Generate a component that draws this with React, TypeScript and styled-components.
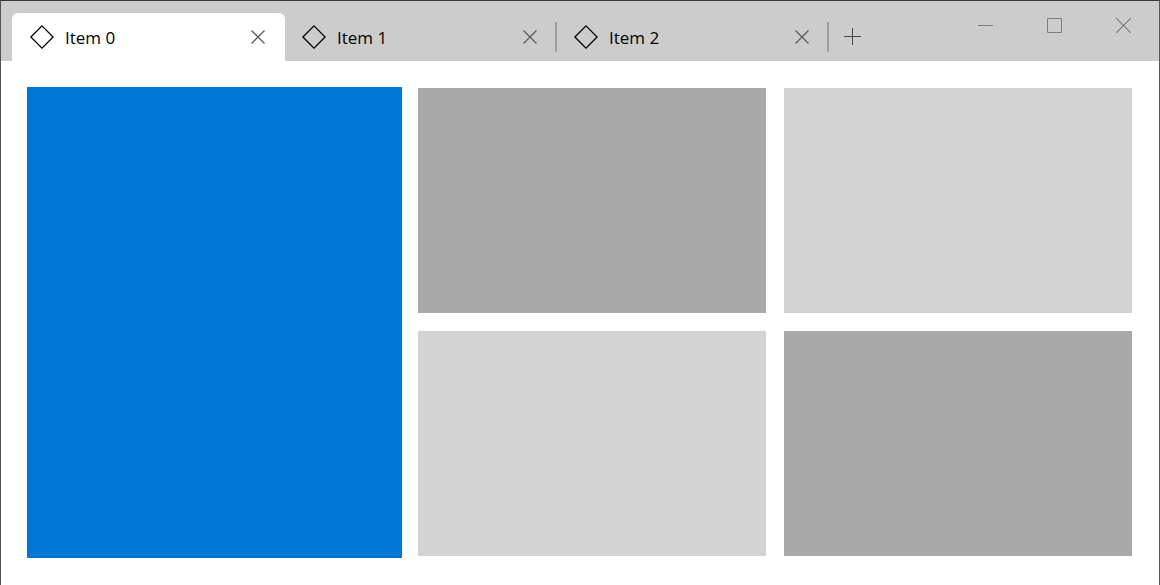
import React, { useState } from "react";
import styled, { createGlobalStyle } from "styled-components";

const GlobalStyle = createGlobalStyle`
  * { box-sizing: border-box; }
  body {
    margin: 0;
    background: #fff;
    color: #000;
    font-family: "Open Sans", "Noto Sans", sans-serif;
    font-size: 17px;
  }
  button {
    margin: 0;
    padding: 0;
    border: 0;
    background: none;
    color: inherit;
    font: inherit;
  }
`;

const Window = styled.div`
  min-height: 100vh;
  border: 1px solid #505058;
  border-top-color: #38383c;
  border-right-color: #58585a;
  border-bottom: 0;
  background: #fff;
`;

const TitleBar = styled.header`
  display: flex;
  align-items: flex-start;
  height: 60px;
  padding: 0 1px 0 11px;
  background: #ccc;
`;

const TabStrip = styled.nav`
  display: flex;
  padding-top: 12px;
`;

const Tab = styled.div<{ $selected: boolean }>`
  display: flex;
  align-items: center;
  width: ${(p) => (p.$selected ? 273 : 272)}px;
  height: 48px;
  padding-left: ${(p) => (p.$selected ? 18 : 17)}px;
  border-radius: 6px 6px 0 0;
  background: ${(p) => (p.$selected ? "#fff" : "transparent")};
`;

const TabButton = styled.button`
  display: flex;
  flex: 1;
  align-items: center;
  gap: 11px;
  height: 48px;
`;

const TabName = styled.span`
  padding-top: 1px;
  line-height: 24px;
`;

const CloseButton = styled.button`
  display: grid;
  place-items: center;
  width: 26px;
  height: 26px;
  margin-right: 12px;
  color: #5c5c5c;
`;

const Separator = styled.span<{ $visible: boolean }>`
  width: 2px;
  height: 30px;
  background: ${(p) => (p.$visible ? "#a0a0a0" : "transparent")};
`;

const AddButton = styled.button`
  display: grid;
  place-items: center;
  width: 47px;
  height: 47px;
  color: #484848;
`;

const WindowControls = styled.div`
  display: flex;
  margin-left: auto;
  color: #7e7e7e;
`;

const WindowButton = styled.button`
  display: grid;
  place-items: center;
  width: 69px;
  height: 49px;
`;

const Content = styled.main`
  display: flex;
  gap: 16px;
  padding: 26px 27px 26px 26px;
`;

const FeaturePanel = styled.section`
  flex: 375 1 0;
  background: #0078d7;
`;

const TileGrid = styled.section`
  display: grid;
  flex: 714 1 0;
  grid-template-columns: 1fr 1fr;
  gap: 18px;
  padding: 1px 0 2px;
`;

const Tile = styled.div<{ $dark: boolean }>`
  height: 225px;
  background: ${(p) => (p.$dark ? "#a9a9a9" : "#d3d3d3")};
`;

const DiamondIcon = () => (
  <svg width="24" height="24" viewBox="0 0 24 24" fill="none" stroke="#000" strokeWidth="1.3" aria-hidden="true">
    <path d="M12 .9 23.1 12 12 23.1.9 12Z" />
  </svg>
);

const CloseIcon = () => (
  <svg width="14" height="14" viewBox="0 0 14 14" fill="none" stroke="currentColor" strokeWidth="1.25" aria-hidden="true">
    <path d="M.5.5l13 13M13.5.5l-13 13" />
  </svg>
);

const tabs = ["Item 0", "Item 1", "Item 2"];
const tiles = [true, false, false, true];

export default function App() {
  const [selected, setSelected] = useState(0);

  return (
    <Window>
      <GlobalStyle />
      <TitleBar>
        <TabStrip aria-label="Tabs">
          {tabs.map((name, i) => (
            <Tab key={name} $selected={i === selected}>
              <TabButton aria-current={i === selected} onClick={() => setSelected(i)}>
                <DiamondIcon />
                <TabName>{name}</TabName>
              </TabButton>
              <CloseButton aria-label={`Close ${name}`}>
                <CloseIcon />
              </CloseButton>
              <Separator $visible={i !== selected} />
            </Tab>
          ))}
          <AddButton aria-label="Add tab">
            <svg width="17" height="17" viewBox="0 0 17 17" stroke="currentColor" aria-hidden="true">
              <path d="M0 8.5h17M8.5 0v17" />
            </svg>
          </AddButton>
        </TabStrip>
        <WindowControls>
          <WindowButton aria-label="Minimize">
            <svg width="15" height="15" viewBox="0 0 15 15" stroke="currentColor" aria-hidden="true">
              <path d="M0 7.5h15" />
            </svg>
          </WindowButton>
          <WindowButton aria-label="Maximize">
            <svg width="15" height="15" viewBox="0 0 15 15" fill="none" stroke="currentColor" aria-hidden="true">
              <path d="M.5.5h14v14H.5z" />
            </svg>
          </WindowButton>
          <WindowButton aria-label="Close window">
            <svg width="15" height="15" viewBox="0 0 15 15" stroke="currentColor" strokeWidth="1.2" aria-hidden="true">
              <path d="M0 0l15 15M15 0L0 15" />
            </svg>
          </WindowButton>
        </WindowControls>
      </TitleBar>
      <Content>
        <FeaturePanel />
        <TileGrid>
          {tiles.map((dark, i) => (
            <Tile key={i} $dark={dark} />
          ))}
        </TileGrid>
      </Content>
    </Window>
  );
}
